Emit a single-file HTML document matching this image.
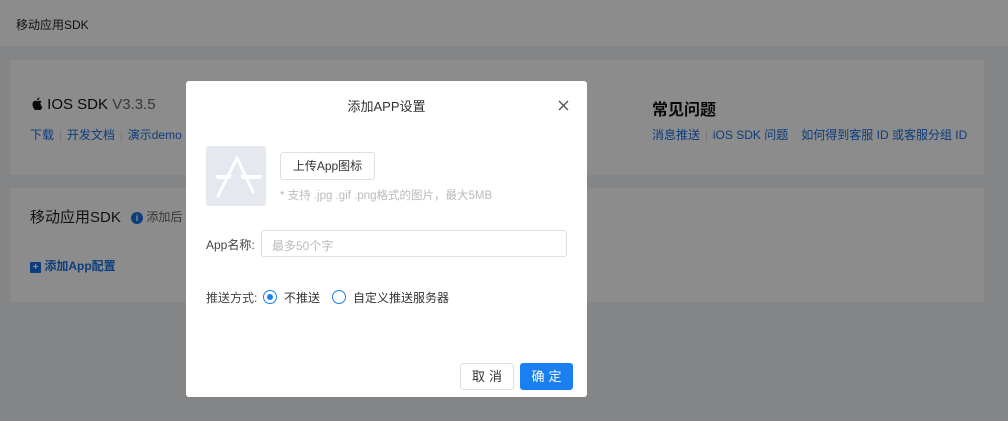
<!DOCTYPE html>
<html><head><meta charset="utf-8"><style>
*{margin:0;padding:0;box-sizing:border-box}
body{width:1008px;height:421px;overflow:hidden;background:#f0f2f5;font-family:"Liberation Sans","Noto Sans CJK SC",sans-serif;position:relative;color:#333}
.hdr{position:absolute;left:0;top:0;width:1008px;height:46px;background:#fff;font-size:12px;padding:16px 0 0 16px;color:#222}
.card{position:absolute;left:10px;width:974px;background:#fff}
.a{color:#1a6fe0;font-size:12px}
.sep{color:#ddd;margin:0 5px;font-size:11px}
.ov{position:absolute;inset:0;background:rgba(0,0,0,0.45)}
.m{position:absolute;left:186px;top:81px;width:401px;height:316px;background:#fff;border-radius:3px}
.btn{position:absolute;border:1px solid #dcdfe6;border-radius:3px;font-size:12px;text-align:center}
</style></head><body>
<div class="hdr">移动应用SDK</div>
<div class="card" style="top:60px;height:115px">
 <div style="position:absolute;left:21px;top:36px;font-size:15px;color:#111"><svg width="12" height="13" viewBox="0 0 12 14" style="vertical-align:-1px"><path d="M9.5 7.5c0-1.6 1.3-2.3 1.3-2.4-.7-1.1-1.8-1.2-2.2-1.2-.9-.1-1.8.6-2.3.6s-1.2-.5-2-.5C3.3 4 2.3 4.6 1.7 5.6c-1.2 2.1-.3 5.2.9 6.9.6.8 1.2 1.7 2.100 1.7.8 0 1.1-.5 2.1-.5s1.3.5 2.1.5c.9 0 1.5-.8 2-1.700.6-.9.9-1.8.9-1.8s-1.7-.7-1.7-2.7zM7.9 2.6c.4-.6.8-1.300.7-2.1-.7 0-1.5.5-1.9 1-.4.5-.8 1.3-.7 2 .7.1 1.4-.4 1.9-.9z" fill="#111"/></svg> IOS SDK <span style="color:#666">V3.3.5</span></div>
 <div style="position:absolute;left:20px;top:66px"><span class="a">下载</span><span class="sep">|</span><span class="a">开发文档</span><span class="sep">|</span><span class="a">演示demo</span></div>
 <div style="position:absolute;left:642px;top:36px;font-size:16px;font-weight:bold;color:#111">常见问题</div>
 <div style="position:absolute;left:642px;top:66px"><span class="a">消息推送</span><span class="sep">|</span><span class="a">iOS SDK 问题</span><span class="sep"> </span><span class="a">如何得到客服 ID 或客服分组 ID</span></div>
</div>
<div class="card" style="top:188px;height:114px">
 <div style="position:absolute;left:20px;top:18px;font-size:15px;color:#222">移动应用SDK</div>
 <div style="position:absolute;left:121px;top:20px;font-size:12px;color:#666"><span style="display:inline-block;width:12px;height:12px;border-radius:50%;background:#1a6fe0;color:#fff;font-size:9px;text-align:center;line-height:12px;font-weight:bold">i</span> 添加后</div>
 <div style="position:absolute;left:20px;top:69px;font-size:12px;color:#1a6fe0;font-weight:bold"><span style="display:inline-block;width:11px;height:11px;background:#1a6fe0;color:#fff;font-size:10px;line-height:11px;text-align:center;border-radius:1px">+</span> 添加App配置</div>
</div>
<div class="ov"></div>
<div class="m">
 <div style="position:absolute;left:0;width:100%;top:15px;text-align:center;font-size:13px;color:#333">添加APP设置</div>
 <svg style="position:absolute;left:372px;top:19px" width="11" height="11" viewBox="0 0 11 11"><path d="M1 1L10 10M10 1L1 10" stroke="#555" stroke-width="1.4" fill="none"/></svg>
 <div style="position:absolute;left:20px;top:65px;width:60px;height:60px;background:#e6e8f0;border-radius:3px">
  <svg width="60" height="60" viewBox="0 0 60 60"><g stroke="#fff" stroke-width="3" stroke-linecap="round" fill="none"><path d="M31 12L12 50"/><path d="M31 12L47 46"/></g><polygon points="9,29 26,29 24,33 11,33" fill="#fff"/><polygon points="34,29 56,29 55,33 36,33" fill="#fff"/></svg>
 </div>
 <div class="btn" style="left:94px;top:71px;width:95px;height:28px;line-height:26px;color:#333">上传App图标</div>
 <div style="position:absolute;left:94px;top:106px;font-size:11.5px;color:#bbb">* 支持 .jpg .gif .png格式的图片，最大5MB</div>
 <div style="position:absolute;left:20px;top:155px;font-size:12px;color:#444">App名称:</div>
 <div style="position:absolute;left:75px;top:149px;width:306px;height:27px;border:1px solid #dcdfe6;border-radius:3px;font-size:12px;color:#bbb;padding:6px 10px">最多50个字</div>
 <div style="position:absolute;left:20px;top:208px;font-size:12px;color:#444">推送方式:</div>
 <div style="position:absolute;left:77px;top:209px;width:14px;height:14px;border:1px solid #1a7ff0;border-radius:50%"><div style="margin:3px;width:6px;height:6px;border-radius:50%;background:#1a7ff0"></div></div>
 <div style="position:absolute;left:98px;top:208px;font-size:12px;color:#333">不推送</div>
 <div style="position:absolute;left:146px;top:209px;width:14px;height:14px;border:1px solid #1a7ff0;border-radius:50%"></div>
 <div style="position:absolute;left:167px;top:208px;font-size:12px;color:#333">自定义推送服务器</div>
 <div class="btn" style="left:274px;top:282px;width:54px;height:27px;line-height:25px;color:#333;letter-spacing:4px;text-indent:4px;font-size:13px">取消</div>
 <div class="btn" style="left:334px;top:282px;width:53px;height:27px;line-height:25px;color:#fff;background:#1a7ff0;border-color:#1a7ff0;letter-spacing:4px;text-indent:4px;font-size:13px">确定</div>
</div>
</body></html>
